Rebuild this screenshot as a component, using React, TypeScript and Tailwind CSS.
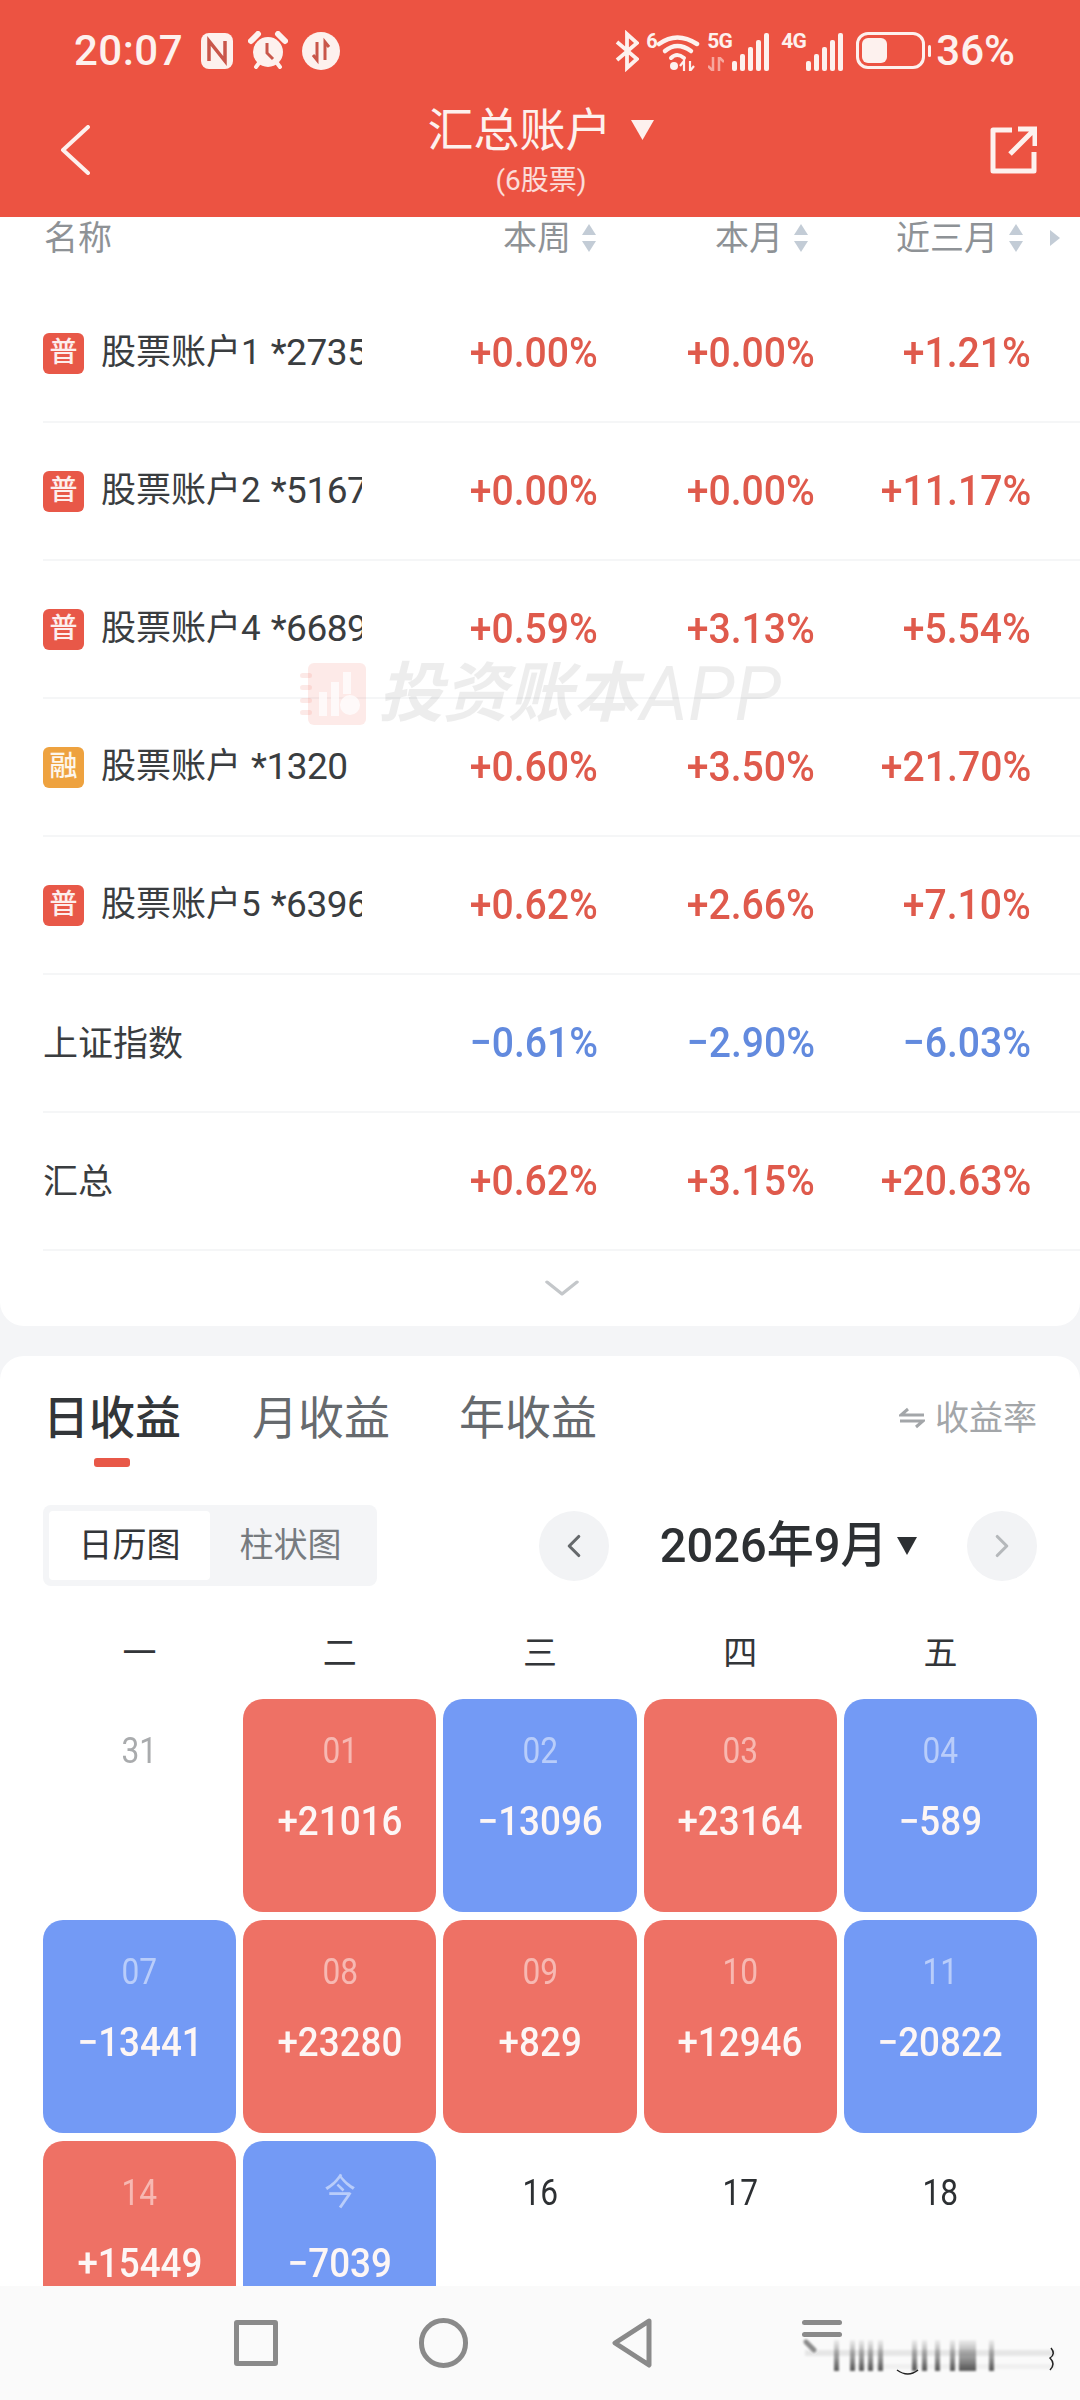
import { ChevronLeft, ChevronRight, ChevronDown } from 'lucide-react';

type Account = { badge?: string; name: string; tail?: string; week: string; month: string; quarter: string };

const rows: Account[] = [
  { badge: '普', name: '股票账户1', tail: '*2735', week: '+0.00%', month: '+0.00%', quarter: '+1.21%' },
  { badge: '普', name: '股票账户2', tail: '*5167', week: '+0.00%', month: '+0.00%', quarter: '+11.17%' },
  { badge: '普', name: '股票账户4', tail: '*6689', week: '+0.59%', month: '+3.13%', quarter: '+5.54%' },
  { badge: '融', name: '股票账户', tail: '*1320', week: '+0.60%', month: '+3.50%', quarter: '+21.70%' },
  { badge: '普', name: '股票账户5', tail: '*6396', week: '+0.62%', month: '+2.66%', quarter: '+7.10%' },
  { name: '上证指数', week: '−0.61%', month: '−2.90%', quarter: '−6.03%' },
  { name: '汇总', week: '+0.62%', month: '+3.15%', quarter: '+20.63%' },
];

const days: { d: string; v?: string; muted?: boolean }[] = [
  { d: '31', muted: true },
  { d: '01', v: '+21016' },
  { d: '02', v: '−13096' },
  { d: '03', v: '+23164' },
  { d: '04', v: '−589' },
  { d: '07', v: '−13441' },
  { d: '08', v: '+23280' },
  { d: '09', v: '+829' },
  { d: '10', v: '+12946' },
  { d: '11', v: '−20822' },
  { d: '14', v: '+15449' },
  { d: '今', v: '−7039' },
  { d: '16' },
  { d: '17' },
  { d: '18' },
];

function Pct({ value, className }: { value: string; className: string }) {
  const down = value.startsWith('−');
  return (
    <div className={`${className} text-right -mt-[3px]`}>
      <span className={`inline-block origin-right scale-x-[0.91] text-[43px] leading-[48px] font-medium ${down ? 'text-[#628ade]' : 'text-[#df5a4c]'}`}>
        {value}
      </span>
    </div>
  );
}

function SortArrows() {
  return (
    <svg width="18" height="32" viewBox="0 0 18 32" className="ml-[9px] shrink-0">
      <path d="M9 2 L16 13 H2 Z" fill="#c3ccd6" />
      <path d="M9 30 L16 19 H2 Z" fill="#c3ccd6" />
    </svg>
  );
}

function StatusLeft() {
  return (
    <div className="flex items-center">
      <span className="text-[42px] leading-[48px] font-medium tracking-[0.5px] text-[#fdf1ee]">20:07</span>
      <svg width="34" height="38" viewBox="0 0 34 38" className="ml-[17px]">
        <rect x="1" y="1" width="32" height="36" rx="8" fill="#fdf1ee" />
        <path d="M9 29 V9 L25 29 V9" fill="none" stroke="#c9564a" strokeWidth="3.5" />
      </svg>
      <svg width="40" height="40" viewBox="0 0 40 40" className="ml-[14px]">
        <circle cx="20" cy="21" r="15" fill="#fdf1ee" />
        <path d="M3 10 L10 3 M37 10 L30 3" stroke="#fdf1ee" strokeWidth="6" strokeLinecap="round" />
        <path d="M8 36 L11 32 M32 36 L29 32" stroke="#fdf1ee" strokeWidth="4" strokeLinecap="round" />
        <path d="M19 12 V22 L25 28" fill="none" stroke="#c9564a" strokeWidth="3" />
      </svg>
      <svg width="38" height="38" viewBox="0 0 38 38" className="ml-[14px]">
        <circle cx="19" cy="19" r="19" fill="#fdf1ee" />
        <path d="M15 10 V28 L11 23 M23 28 V10 L27 15" fill="none" stroke="#c9564a" strokeWidth="3" />
      </svg>
    </div>
  );
}

function Signal({ label, dim }: { label: string; dim?: boolean }) {
  const heights = [10, 17, 24, 31, 38];
  return (
    <div className="relative flex items-end gap-[3px] h-[40px] w-[62px] justify-end">
      <span className="absolute left-0 top-[-1px] text-[21px] leading-[22px] font-bold text-[#fdf1ee] tracking-[-1px]">{label}</span>
      {dim && (
        <svg width="16" height="14" viewBox="0 0 16 14" className="absolute left-[1px] bottom-0">
          <path d="M5 0 V14 L0 9 M11 14 V0 L16 5" fill="none" stroke="#f6a79e" strokeWidth="2.5" />
        </svg>
      )}
      {heights.map((h) => (
        <i key={h} className="block w-[5px] rounded-[2px] bg-[#fdf1ee]" style={{ height: h }} />
      ))}
    </div>
  );
}

function StatusRight() {
  return (
    <div className="flex items-center">
      <svg width="24" height="42" viewBox="0 0 24 42">
        <path d="M2 12 L22 29 L12 38 V4 L22 13 L2 30" fill="none" stroke="#fdf1ee" strokeWidth="3.8" />
      </svg>
      <div className="relative ml-[7px] w-[56px] h-[40px]">
        <span className="absolute left-0 top-0 text-[20px] leading-[20px] font-bold text-[#fdf1ee]">6</span>
        <svg width="56" height="40" viewBox="0 0 56 40">
          <path d="M13 13 Q31 0 51 13" fill="none" stroke="#fdf1ee" strokeWidth="4.5" strokeLinecap="round" />
          <path d="M19 20 Q31 10 45 20" fill="none" stroke="#fdf1ee" strokeWidth="4.5" strokeLinecap="round" />
          <path d="M25 27 Q31 21 38 27" fill="none" stroke="#fdf1ee" strokeWidth="4" strokeLinecap="round" />
          <circle cx="28" cy="35" r="4" fill="#fdf1ee" />
          <path d="M38 40 V30 L34 35 M44 30 V40 L48 35" fill="none" stroke="#fdf1ee" strokeWidth="2.2" />
        </svg>
      </div>
      <div className="ml-[5px]"><Signal label="5G" dim /></div>
      <div className="ml-[12px]"><Signal label="4G" /></div>
      <div className="ml-[13px] flex items-center">
        <div className="w-[69px] h-[37px] rounded-[12px] border-[3px] border-[#fdf1ee] p-[3px]">
          <div className="h-full w-[25px] rounded-[6px] bg-[#fdf1ee]" />
        </div>
        <i className="block w-[3px] h-[12px] ml-[3px] rounded-[2px] bg-[#fdf1ee]" />
      </div>
      <span className="ml-[5px] text-[42px] leading-[48px] font-medium text-[#fdf1ee]">36%</span>
    </div>
  );
}

function Watermark() {
  return (
    <div className="absolute left-[300px] top-[444px] flex items-center pointer-events-none">
      <svg width="66" height="64" viewBox="0 0 66 64">
        <rect x="8" y="1" width="58" height="62" rx="6" fill="#f06a5a" opacity="0.14" />
        <g fill="#ffffff" opacity="0.75">
          <rect x="19" y="30" width="8" height="24" />
          <rect x="31" y="20" width="8" height="34" />
          <rect x="43" y="10" width="8" height="22" />
          <circle cx="50" cy="43" r="10" />
        </g>
        <g fill="#f06a5a" opacity="0.14">
          <rect x="0" y="11" width="12" height="5" rx="2.5" />
          <rect x="0" y="23" width="12" height="5" rx="2.5" />
          <rect x="0" y="36" width="12" height="5" rx="2.5" />
          <rect x="0" y="48" width="12" height="5" rx="2.5" />
        </g>
      </svg>
      <span className="ml-[12px] text-[65px] leading-[66px] font-bold italic text-black/[0.07] whitespace-nowrap">投资账本</span>
      <span className="ml-[2px] text-[76px] leading-[66px] italic text-black/[0.07] whitespace-nowrap">APP</span>
    </div>
  );
}

function AccountsCard() {
  return (
    <div className="relative bg-white rounded-b-[24px] h-[1109px] shrink-0">
      <div className="flex items-start h-[68px] pl-[44px] pr-[49px] pt-[1px] text-[34px] leading-[40px] text-[#8e9296]">
        <div className="w-[318px]">名称</div>
        <div className="w-[236px] flex justify-end items-center -mr-[5px]">本周<SortArrows /></div>
        <div className="w-[217px] flex justify-end items-center -mr-[1px]">本月<SortArrows /></div>
        <div className="w-[216px] flex justify-end items-center -mr-[3px]">近三月<SortArrows /></div>
        <svg width="12" height="18" viewBox="0 0 12 18" className="absolute left-[1049px] top-[12px]">
          <path d="M1 1 L11 9 L1 17 Z" fill="#c3ccd6" />
        </svg>
      </div>
      {rows.map((r) => (
        <div key={r.name + r.tail} className="ml-[43px] h-[138px] pr-[49px] flex items-center border-b-2 border-[#f5f6f7]">
          <div className="w-[319px] flex items-center overflow-hidden text-[35px] leading-[42px] text-[#3a3d40] whitespace-nowrap">
            {r.badge && (
              <span className={`shrink-0 w-[41px] h-[41px] mr-[17px] rounded-[6px] flex items-center justify-center text-[28px] leading-none font-medium text-white/90 ${r.badge === '融' ? 'bg-[#eea23f]' : 'bg-[#e85848]'}`}>
                {r.badge}
              </span>
            )}
            <span className={r.badge ? '' : 'pt-[3px]'}>{r.name}</span>
            {r.tail && <span className="ml-[10px] text-[37px] tracking-[-0.5px]">{r.tail}</span>}
          </div>
          <Pct value={r.week} className="w-[236px]" />
          <Pct value={r.month} className="w-[217px]" />
          <Pct value={r.quarter} className="w-[216px]" />
        </div>
      ))}
      <div className="flex justify-center pt-[13px] pl-[43px]">
        <ChevronDown size={48} strokeWidth={1.5} className="text-[#c4c7ca] scale-x-125" />
      </div>
      <Watermark />
    </div>
  );
}

function CalendarCard() {
  return (
    <div className="bg-white rounded-t-[24px] mt-[30px] flex-1 px-[43px] pt-[31px]">
      <div className="flex items-start">
        <div className="flex flex-col items-center">
          <span className="text-[46px] leading-[62px] font-medium text-[#333639]">日收益</span>
          <i className="block mt-[9px] w-[36px] h-[9px] rounded-[3px] bg-[#e85848]" />
        </div>
        <span className="ml-[71px] text-[46px] leading-[62px] text-[#666a6e]">月收益</span>
        <span className="ml-[69px] text-[46px] leading-[62px] text-[#666a6e]">年收益</span>
        <div className="ml-auto mt-[11px] flex items-center text-[34px] leading-[40px] text-[#a3a6a9]">
          <svg width="26" height="24" viewBox="0 0 26 24" className="mr-[10px]">
            <path d="M25 9 H2 L9 3 M1 15 H24 L17 21" fill="none" stroke="#a3a6a9" strokeWidth="3" />
          </svg>
          收益率
        </div>
      </div>

      <div className="mt-[38px] flex items-center h-[81px]">
        <div className="w-[334px] h-[81px] rounded-[8px] bg-[#f4f5f7] p-[6px] flex items-stretch">
          <div className="w-[161px] bg-white rounded-[4px] flex items-center justify-center text-[34px] text-[#333639]">日历图</div>
          <div className="flex-1 flex items-center justify-center text-[34px] text-[#777b7f]">柱状图</div>
        </div>
        <div className="ml-[162px] w-[70px] h-[70px] rounded-full bg-[#f2f3f5] flex items-center justify-center">
          <ChevronLeft size={38} strokeWidth={2} className="text-[#66696c]" />
        </div>
        <span className="ml-[46px] inline-block scale-x-[0.96] text-[49px] leading-[56px] font-medium text-[#2d3033] whitespace-nowrap">2026年9月</span>
        <svg width="22" height="20" viewBox="0 0 22 20" className="ml-[4px]">
          <path d="M1 1 H21 L11 19 Z" fill="#2d3033" />
        </svg>
        <div className="ml-auto w-[70px] h-[70px] rounded-full bg-[#f2f3f5] flex items-center justify-center">
          <ChevronRight size={38} strokeWidth={2} className="text-[#b5b8bb]" />
        </div>
      </div>

      <div className="mt-[47px] grid grid-cols-5 gap-x-[7px] text-[34px] leading-[40px] text-[#333639] text-center">
        {['一', '二', '三', '四', '五'].map((w) => (
          <div key={w}>{w}</div>
        ))}
      </div>

      <div className="mt-[26px] grid grid-cols-5 gap-x-[7px] gap-y-[8px] auto-rows-[213px]">
        {days.map((c) => {
          const colored = !!c.v;
          const bg = !colored ? '' : c.v!.startsWith('+') ? 'bg-[#ee7165]' : 'bg-[#739af5]';
          const dateColor = colored ? 'text-white/50' : c.muted ? 'text-[#a9abad]' : 'text-[#2d3033]';
          return (
            <div key={c.d} className={`${bg} rounded-[20px] flex flex-col items-center pt-[32px]`}>
              <span className={`inline-block scale-x-[0.88] text-[36px] leading-[40px] ${dateColor}`}>{c.d}</span>
              {c.v && <span className="mt-[29px] inline-block scale-x-[0.92] text-[40px] leading-[44px] font-medium text-[#fdf6f5]">{c.v}</span>}
            </div>
          );
        })}
      </div>
    </div>
  );
}

function NavBar() {
  return (
    <div className="relative h-[114px] shrink-0 bg-[#fafafa] flex items-start pl-[234px] pt-[32px]">
      <div className="w-[44px] h-[46px] mt-[2px] rounded-[3px] border-[5px] border-[#8a8a8a]" />
      <div className="ml-[141px] w-[49px] h-[50px] rounded-full border-[5px] border-[#8a8a8a]" />
      <svg width="42" height="50" viewBox="0 0 42 50" className="ml-[143px]">
        <path d="M38 3 L4 25 L38 47 Z" fill="none" stroke="#8a8a8a" strokeWidth="5" strokeLinejoin="round" />
      </svg>
      <div className="ml-[149px] w-[40px] mt-[2px] flex flex-col gap-[7px]">
        <i className="block h-[5px] rounded-full bg-[#8a8a8a]" />
        <i className="block h-[5px] rounded-full bg-[#8a8a8a]" />
      </div>
      <svg width="270" height="50" viewBox="0 0 270 50" className="absolute left-[790px] top-[52px]">
        <defs>
          <linearGradient id="fade" x1="0" y1="0" x2="0" y2="1">
            <stop offset="0" stopColor="#000" stopOpacity="0.05" />
            <stop offset="1" stopColor="#000" stopOpacity="0.65" />
          </linearGradient>
          <filter id="soft"><feGaussianBlur stdDeviation="1" /></filter>
        </defs>
        <g filter="url(#soft)">
          <rect x="15" y="12" width="250" height="6" fill="#000" opacity="0.08" />
          <rect x="60" y="26" width="205" height="5" fill="#000" opacity="0.04" />
          <path d="M16 4 L24 12" stroke="#8a8a8a" strokeWidth="5" strokeLinecap="round" />
          {[44, 60, 69, 78, 88, 122, 132, 145, 160, 199].map((x) => (
            <rect key={x} x={x} y="2" width="5" height="31" fill="url(#fade)" />
          ))}
          <rect x="169" y="2" width="17" height="31" fill="url(#fade)" />
        </g>
        <path d="M107 32 Q118 40 128 32" fill="none" stroke="#222" strokeWidth="1.5" />
        <path d="M261 10 Q266 16 260 20 Q266 26 260 32" fill="none" stroke="#222" strokeWidth="1.5" />
      </svg>
    </div>
  );
}

export default function App() {
  return (
    <div className="w-[1080px] h-[2400px] flex flex-col overflow-hidden bg-[#f4f5f7] font-['Roboto','Noto_Sans_CJK_SC',sans-serif]">
      <header className="h-[217px] shrink-0 bg-[#ec5342] text-white">
        <div className="h-[97px] flex items-center justify-between pl-[74px] pr-[65px] pt-[4px]">
          <StatusLeft />
          <StatusRight />
        </div>
        <div className="flex items-start justify-between pl-[60px] pr-[43px] pt-[7px]">
          <svg width="30" height="50" viewBox="0 0 30 50" className="mt-[21px]">
            <path d="M28 2 L3 25 L28 48" fill="none" stroke="#fdf1ee" strokeWidth="4" strokeLinecap="round" strokeLinejoin="round" />
          </svg>
          <div className="flex flex-col items-center pt-[1px] pl-[2px]">
            <div className="flex items-center">
              <span className="text-[46px] leading-[50px] text-[#fdf1ee]">汇总账户</span>
              <svg width="25" height="22" viewBox="0 0 25 22" className="ml-[18px]">
                <path d="M1 1 H24 L12.5 21 Z" fill="#fdf1ee" />
              </svg>
            </div>
            <span className="mt-[9px] text-[28px] leading-[34px] text-white/80">(6股票)</span>
          </div>
          <svg width="47" height="48" viewBox="0 0 47 48" className="mt-[22px]">
            <path d="M22 4 H3 V45 H44 V26" fill="none" stroke="#fdf1ee" strokeWidth="5" strokeLinejoin="round" />
            <path d="M20 28 L44 4 M28 3 H45 V20" fill="none" stroke="#fdf1ee" strokeWidth="5" />
          </svg>
        </div>
      </header>
      <main className="flex-1 min-h-0 flex flex-col overflow-hidden">
        <AccountsCard />
        <CalendarCard />
      </main>
      <NavBar />
    </div>
  );
}
